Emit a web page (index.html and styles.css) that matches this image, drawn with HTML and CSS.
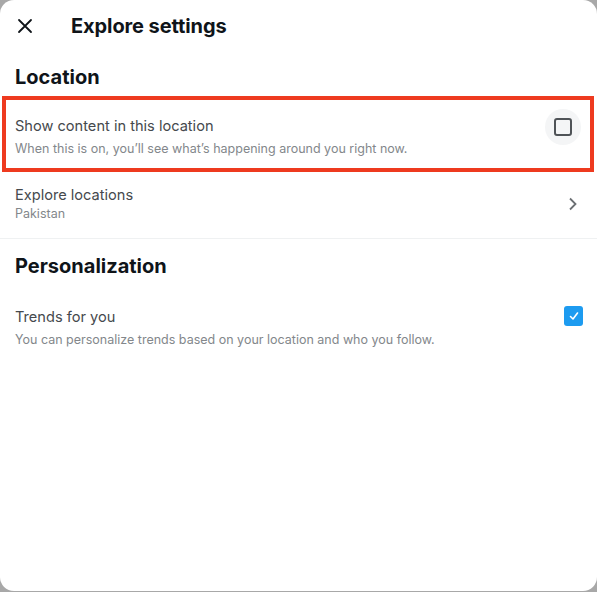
FILE: index.html
```html
<!DOCTYPE html>
<html>
<head>
<meta charset="utf-8">
<link rel="stylesheet" href="styles.css">
</head>
<body>
<div class="card">
  <header class="header">
    <span class="close">
      <svg width="16" height="16" viewBox="0 0 16 16"><path d="M2 2L14 14M14 2L2 14" stroke="#0f1419" stroke-width="1.8" stroke-linecap="round"/></svg>
    </span>
    <h1 class="title">Explore settings</h1>
  </header>
  <h2 class="section">Location</h2>
  <div class="row highlight">
    <div class="text">
      <div class="label">Show content in this location</div>
      <div class="sub">When this is on, you’ll see what’s happening around you right now.</div>
    </div>
    <span class="check-wrap"><span class="check"></span></span>
  </div>
  <div class="row link">
    <div class="text">
      <div class="label">Explore locations</div>
      <div class="sub small">Pakistan</div>
    </div>
    <svg class="chev" width="10" height="14" viewBox="0 0 10 14"><path d="M2 1.5L7.5 7L2 12.5" fill="none" stroke="#6b6f73" stroke-width="1.8"/></svg>
  </div>
  <h2 class="section second">Personalization</h2>
  <div class="row trends">
    <div class="text">
      <div class="label">Trends for you</div>
      <div class="sub">You can personalize trends based on your location and who you follow.</div>
    </div>
    <span class="check on">
      <svg width="12" height="12" viewBox="0 0 12 12"><path d="M2.5 6.5L5 9L9.5 3" fill="none" stroke="#fff" stroke-width="1.6" stroke-linecap="round" stroke-linejoin="round"/></svg>
    </span>
  </div>
</div>
</body>
</html>
```
FILE: styles.css
```css
html, body { margin: 0; padding: 0; }
body {
  background: #a8a8a8;
  font-family: "Inter", "Liberation Sans", sans-serif;
  width: 597px;
  height: 592px;
  overflow: hidden;
}
.card {
  background: #fff;
  width: 597px;
  height: 591px;
  border-radius: 14px;
  box-sizing: border-box;
}
.header {
  display: flex;
  align-items: center;
  height: 52px;
  padding-left: 17px;
}
.close { display: flex; width: 16px; height: 16px; }
.title {
  margin: 0 0 0 38px;
  font-size: 20px;
  font-weight: 700;
  color: #0f1419;
  letter-spacing: -0.1px;
}
.section {
  margin: 0;
  padding: 14px 15px 7px;
  font-size: 20px;
  font-weight: 700;
  color: #0f1419;
  line-height: 23px;
}
.section.second { padding-top: 16px; padding-bottom: 14px; }
.row {
  display: flex;
  align-items: flex-start;
  justify-content: space-between;
  padding: 0 15px;
  box-sizing: border-box;
}
.row.highlight {
  margin: 0 3px 0 2px;
  border: 4px solid #ee3a1f;
  height: 76px;
  padding: 17px 9px 0 9px;
}
.row.link {
  height: 67px;
  border-bottom: 1px solid #eff1f2;
  padding-top: 14px;
  padding-right: 19px;
}
.row.trends { height: 60px; padding-top: 16px; padding-right: 14px; }
.text { display: flex; flex-direction: column; }
.label {
  font-size: 14.6px;
  color: #45494d;
  line-height: 18px;
}
.sub {
  font-size: 12.5px;
  color: #83878b;
  line-height: 17px;
  margin-top: 5px;
}
.sub.small { margin-top: 1px; }
.check-wrap {
  width: 36px;
  height: 36px;
  margin-top: -8px;
  border-radius: 50%;
  background: #f4f5f6;
  display: flex;
  align-items: center;
  justify-content: center;
}
.chev { margin-top: 11px; }
.check {
  width: 18px;
  height: 18px;
  box-sizing: border-box;
  border: 2px solid #4f5357;
  border-radius: 3px;
}
.check.on {
  width: 19px;
  height: 20px;
  margin-top: -2px;
  border: none;
  background: #1d9bf0;
  display: flex;
  align-items: center;
  justify-content: center;
  border-radius: 3px;
}
```
